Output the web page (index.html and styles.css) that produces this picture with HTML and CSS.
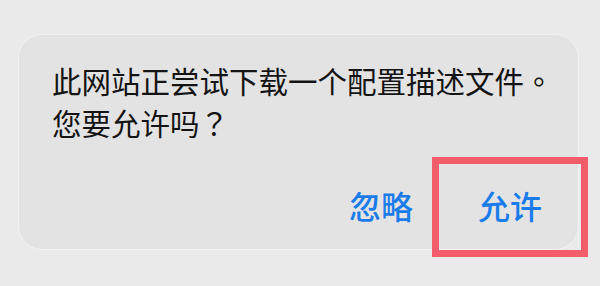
FILE: index.html
```html
<!DOCTYPE html>
<html lang="zh-CN">
<head>
<meta charset="utf-8">
<title>配置描述文件</title>
<link rel="stylesheet" href="styles.css">
</head>
<body>
<div class="page">
  <div class="dialog">
    <p class="message">此网站正尝试下载一个配置描述文件<span class="punct" lang="zh-TW">。</span><br>您要允许吗<span class="punct" lang="zh-TW">？</span></p>
    <div class="actions">
      <span class="btn">忽略</span>
      <span class="btn">允许</span>
    </div>
  </div>
  <div class="highlight"></div>
</div>
</body>
</html>
```
FILE: styles.css
```css
html, body {
  margin: 0;
  padding: 0;
  background: #eaeaea;
}
.page {
  position: relative;
  width: 600px;
  height: 286px;
  padding-top: 34px;
  padding-left: 18px;
  box-sizing: border-box;
  font-family: "Noto Sans CJK SC", "Noto Sans", sans-serif;
}
.dialog {
  width: 561px;
  height: 216px;
  box-sizing: border-box;
  background: #e3e3e3;
  border: 1px solid #f2f2f2;
  border-radius: 24px;
  padding: 24px 0 0 33px;
}
.message {
  margin: 0;
  font-size: 29.5px;
  line-height: 42px;
  color: #141414;
  white-space: nowrap;
  text-spacing-trim: space-all;
}
.punct {
  font-family: "Noto Sans CJK TC", "Noto Sans CJK SC", sans-serif;
  font-variant-east-asian: traditional;
}
.actions {
  display: flex;
  justify-content: flex-end;
  gap: 65px;
  padding-right: 36px;
  margin-top: 42px;
}
.btn {
  font-size: 32px;
  line-height: 40px;
  font-weight: 500;
  color: #1a7ceb;
}
.highlight {
  position: absolute;
  left: 432px;
  top: 157px;
  width: 156px;
  height: 100px;
  box-sizing: border-box;
  border: 7px solid #f25c6b;
}
```
